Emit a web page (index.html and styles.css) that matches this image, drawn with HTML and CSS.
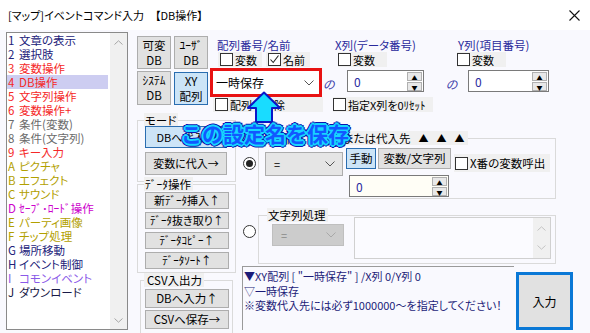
FILE: index.html
```html
<!DOCTYPE html>
<html lang="ja">
<head>
    <meta charset="UTF-8" />
    <title>イベントコマンド入力</title>
    <link rel="stylesheet" href="styles.css">
</head>
<body>
<div class="titlebar">
    <span>[マップ]イベントコマンド入力　【DB操作】</span>
    <svg class="close" width="11" height="11" viewBox="0 0 11 11"><path d="M0.5 0.5L10.5 10.5M10.5 0.5L0.5 10.5" stroke="#111" stroke-width="1.1"/></svg>
</div>

<div class="dialog">
    <!-- コマンド一覧 -->
    <div class="cmdlist">
        <ul>
            <li class="navy"><b>1</b>文章の表示</li>
            <li class="navy"><b>2</b>選択肢</li>
            <li class="red"><b>3</b>変数操作</li>
            <li class="red sel"><b>4</b>DB操作</li>
            <li class="red"><b>5</b>文字列操作</li>
            <li class="red"><b>6</b>変数操作+</li>
            <li class="gray"><b>7</b>条件(変数)</li>
            <li class="gray"><b>8</b>条件(文字列)</li>
            <li class="red"><b>9</b>キー入力</li>
            <li class="olive"><b>A</b>ピクチャ</li>
            <li class="olive"><b>B</b>エフェクト</li>
            <li class="olive"><b>C</b>サウンド</li>
            <li class="magenta"><b>D</b>ｾｰﾌﾞ･ﾛｰﾄﾞ操作</li>
            <li class="olive"><b>E</b>パーティ画像</li>
            <li class="olive"><b>F</b>チップ処理</li>
            <li class="navy"><b>G</b>場所移動</li>
            <li class="navy"><b>H</b>イベント制御</li>
            <li class="purple"><b>I</b>コモンイベント</li>
            <li class="dark"><b>J</b>ダウンロード</li>
        </ul>
        <div class="vscroll">
            <svg width="9" height="5" viewBox="0 0 9 5"><path d="M0.5 4.5L4.5 0.8L8.5 4.5" fill="none" stroke="#a6a6a6"/></svg>
            <svg width="9" height="5" viewBox="0 0 9 5"><path d="M0.5 0.5L4.5 4.2L8.5 0.5" fill="none" stroke="#a6a6a6"/></svg>
        </div>
    </div>

    <div class="panel">
        <div class="top">
            <div class="dbtypes">
                <button class="btn">可変<br>DB</button>
                <button class="btn">ﾕｰｻﾞ<br>DB</button>
                <button class="btn">ｼｽﾃﾑ<br>DB</button>
                <button class="btn on xy">XY<br>配列</button>
            </div>

            <div class="cap cap-name">配列番号/名前</div>
            <div class="checks-name">
                <label class="chk"><span class="box"></span>変数</label>
                <label class="chk"><span class="box checked"><svg width="11" height="11" viewBox="0 0 11 11"><path d="M1.5 5.5L4.2 8.5L9.5 1.5" fill="none" stroke="#222" stroke-width="1.1"/></svg></span>名前</label>
            </div>
            <div class="namebox">
                <div class="combo white">
                    <span>一時保存</span>
                    <svg width="10" height="6" viewBox="0 0 10 6"><path d="M0.5 0.5L5 5L9.5 0.5" fill="none" stroke="#555"/></svg>
                </div>
            </div>
            <label class="chk chk-unname"><span class="box"></span>配列名解除</label>

            <span class="no no1">の</span>

            <div class="cap cap-x">X列(データ番号)</div>
            <label class="chk chk-xvar"><span class="box"></span>変数</label>
            <div class="num num-x">
                <span class="val">0</span>
                <span class="spin"><i>▲</i><i>▼</i></span>
            </div>
            <label class="chk chk-reset"><span class="box"></span>指定X列を0ﾘｾｯﾄ</label>

            <span class="no no2">の</span>

            <div class="cap cap-y">Y列(項目番号)</div>
            <label class="chk chk-yvar"><span class="box"></span>変数</label>
            <div class="num num-y">
                <span class="val">0</span>
                <span class="spin"><i>▲</i><i>▼</i></span>
            </div>
        </div>

        <div class="bottom">
            <div class="leftcol">
                <div class="group g-mode">
                    <div class="legend">モード</div>
                    <button class="btn on b-db">DBへ代入←</button>
                    <button class="btn b-var">変数に代入→</button>
                </div>
                <div class="group g-data">
                    <div class="legend">ﾃﾞｰﾀ操作</div>
                    <button class="btn small">新ﾃﾞｰﾀ挿入↑</button>
                    <button class="btn small">ﾃﾞｰﾀ抜き取り↑</button>
                    <button class="btn small">ﾃﾞｰﾀｺﾋﾟｰ↑</button>
                    <button class="btn small">ﾃﾞｰﾀｿｰﾄ↑</button>
                </div>
                <div class="group g-csv">
                    <div class="legend">CSV入出力</div>
                    <button class="btn csv">DBへ入力↑</button>
                    <button class="btn csv">CSVへ保存→</button>
                </div>
            </div>

            <div class="rightcol">
                <div class="row r-assign">
                    <span class="radio on"></span>
                    <div class="group g-assign">
                        <div class="legend"><span class="hid">代入値</span><span class="lbl">または代入先</span><span class="tri">▲</span><span class="tri">▲</span><span class="tri">▲</span></div>
                        <div class="assign-body">
                            <div class="combo op">
                                <span>=</span>
                                <svg width="10" height="6" viewBox="0 0 10 6"><path d="M0.5 0.5L5 5L9.5 0.5" fill="none" stroke="#555"/></svg>
                            </div>
                            <div class="assign-right">
                                <div class="assign-btns">
                                    <button class="btn on b-man">手動</button>
                                    <button class="btn b-str">変数/文字列</button>
                                    <label class="chk chk-call"><span class="box"></span>X番の変数呼出</label>
                                </div>
                                <div class="num num-val">
                                    <span class="val">0</span>
                                    <span class="spin"><i>▲</i><i>▼</i></span>
                                </div>
                            </div>
                        </div>
                    </div>
                </div>

                <div class="row r-str">
                    <span class="radio"></span>
                    <div class="group g-str">
                        <div class="str-left">
                            <div class="legend">文字列処理</div>
                            <div class="combo disabled">
                                <span>=</span>
                                <svg width="10" height="6" viewBox="0 0 10 6"><path d="M0.5 0.5L5 5L9.5 0.5" fill="none" stroke="#a8a8a8"/></svg>
                            </div>
                        </div>
                        <div class="textarea">
                            <div class="tscroll">
                                <svg width="9" height="5" viewBox="0 0 9 5"><path d="M0.5 4.5L4.5 0.8L8.5 4.5" fill="none" stroke="#c4c4c4"/></svg>
                                <svg width="9" height="5" viewBox="0 0 9 5"><path d="M0.5 0.5L4.5 4.2L8.5 0.5" fill="none" stroke="#c4c4c4"/></svg>
                            </div>
                        </div>
                    </div>
                </div>

                <div class="row r-info">
                    <div class="info">
                        <div>▼XY配列 [ "一時保存" ] /X列 0/Y列 0</div>
                        <div>▽一時保存</div>
                        <div>※変数代入先には必ず1000000～を指定してください！</div>
                    </div>
                    <button class="btn enter">入力</button>
                </div>
            </div>
        </div>
    </div>

    <!-- 注釈 -->
    <svg class="note-arrow" width="36" height="32" viewBox="0 0 36 32">
        <path d="M18 1.5L34 17H26V31H10V17H2Z" fill="#19dcff" stroke="#0a18c8" stroke-width="2" stroke-linejoin="round"/>
    </svg>
    <div class="note-text">この設定名を保存</div>
</div>
</body>
</html>
```

FILE: styles.css
```css
* {
    box-sizing: border-box;
}
body {
    margin: 0;
    width: 590px;
    height: 333px;
    overflow: hidden;
    background: #f9f9fe;
    font-family: "Noto Sans CJK JP", "Noto Sans", sans-serif;
    font-size: 11px;
    font-feature-settings: "palt";
    color: #000;
}
.titlebar {
    height: 30px;
    background: #fff;
    display: flex;
    align-items: center;
    justify-content: space-between;
    padding: 0 10px 0 8px;
    font-size: 11px;
    line-height: 1;
}
.dialog {
    position: relative;
    display: flex;
    height: 303px;
    padding: 2px 0 0 6px;
}

/* list */
.cmdlist {
    width: 122px;
    height: 298px;
    border: 1px solid #8a8a8a;
    background: #fff;
    display: flex;
}
.cmdlist ul {
    list-style: none;
    margin: 0;
    padding: 0;
    flex: 1;
}
.cmdlist li {
    height: 14px;
    line-height: 14px;
    padding-left: 1px;
    font-size: 11.5px;
    white-space: nowrap;
}
.cmdlist li b {
    display: inline-block;
    width: 11px;
    font-weight: normal;
}
.cmdlist li.sel { background: #cdcdf1; }
.navy { color: #22227a; }
.red { color: #f52828; }
.gray { color: #6b6b6b; }
.olive { color: #b2a000; }
.magenta { color: #cc00cc; }
.purple { color: #8a5ae8; }
.dark { color: #1a1a48; }
.vscroll {
    width: 17px;
    margin-left: 2px;
    background: #f0f0f0;
    display: flex;
    flex-direction: column;
    justify-content: space-between;
    align-items: center;
    padding: 7px 0 6px;
}

/* controls */
.btn {
    font: inherit;
    font-feature-settings: "palt";
    color: #000;
    background: #e1e1e1;
    border: 1px solid #adadad;
    padding: 0;
    line-height: 15px;
    white-space: nowrap;
}
.btn.on {
    background: #cce4f7;
    border-color: #2a6db0;
}
.chk {
    display: flex;
    align-items: center;
    gap: 2px;
    height: 15px;
    background: #f0f0f0;
    white-space: nowrap;
}
.box {
    width: 13px;
    height: 13px;
    border: 1px solid #333;
    background: #fff;
    display: flex;
    align-items: center;
    justify-content: center;
    flex: none;
}
.combo {
    display: flex;
    align-items: center;
    justify-content: space-between;
    background: #e5e5e5;
    border: 1px solid #adadad;
    padding: 0 7px 0 8px;
}
.combo.white {
    background: #fff;
    border: none;
    height: 100%;
    padding: 0 5px 0 3px;
    font-size: 12px;
}
.combo.disabled {
    background: #cccccc;
    border-color: #bfbfbf;
    color: #8a8a8a;
}
.num {
    display: flex;
    align-items: center;
    justify-content: space-between;
    background: #fff;
    border: 1px solid #7a7a7a;
    padding: 0 1px 0 6px;
    color: #2a2aa0;
    font-size: 12px;
}
.spin {
    display: flex;
    flex-direction: column;
    gap: 1px;
}
.spin i {
    font-style: normal;
    width: 15px;
    height: 9px;
    line-height: 9px;
    font-size: 6px;
    text-align: center;
    background: #e8e8e8;
    border: 1px solid #b0b0b0;
    color: #000;
}
.radio {
    width: 13px;
    height: 13px;
    border-radius: 50%;
    border: 1px solid #333;
    background: #fff;
    display: flex;
    align-items: center;
    justify-content: center;
    flex: none;
}
.radio.on::after {
    content: "";
    width: 7px;
    height: 7px;
    border-radius: 50%;
    background: #222;
}

/* panel */
.panel {
    margin-left: 9px;
    width: 438px;
}
.top {
    display: grid;
    grid-template-columns: 73px 113px 12px 110px 13px 117px;
    grid-template-rows: 15px 16px 30px 15px;
    margin-top: 4px;
}
.dbtypes {
    grid-column: 1;
    grid-row: 1 / 5;
    display: grid;
    grid-template-columns: 34px 34px;
    grid-template-rows: 33px 34px;
    column-gap: 3px;
    row-gap: 2px;
    align-self: start;
}
.dbtypes .btn {
    font-size: 11.5px;
}
.dbtypes .xy {
    margin-top: 1px;
}
.cap {
    color: #2a2a9c;
    line-height: 15px;
    white-space: nowrap;
    margin-top: 2px;
    font-size: 11.5px;
}
.cap-name { grid-column: 2; grid-row: 1; padding-left: 7px; }
.cap-x { grid-column: 4; grid-row: 1; }
.cap-y { grid-column: 6; grid-row: 1; }
.checks-name {
    grid-column: 2;
    grid-row: 2;
    display: flex;
    gap: 4px;
    margin: 1px 0 0 8px;
}
.checks-name .chk {
    padding: 0 5px 0 2px;
}
.namebox {
    grid-column: 2;
    grid-row: 3;
    border: 3px solid #e81212;
    height: 29px;
    margin-top: 1px;
    margin-right: 1px;
}
.chk-unname {
    grid-column: 2;
    grid-row: 4;
    margin: 0 0 0 3px;
    padding-left: 2px;
}
.no {
    grid-row: 3;
    align-self: center;
    color: #3a3aa8;
    font-style: italic;
    margin-top: 2px;
    font-size: 12px;
}
.no1 { grid-column: 3; }
.no2 { grid-column: 5; justify-self: center; }
.chk-xvar {
    grid-column: 4;
    grid-row: 2;
    width: 49px;
    margin: 1px 0 0 3px;
}
.chk-yvar {
    grid-column: 6;
    grid-row: 2;
    width: 49px;
    margin: 1px 0 0 -1px;
}
.num-x {
    grid-column: 4;
    grid-row: 3;
    width: 77px;
    height: 22px;
    margin: 3px 0 0 12px;
}
.num-y {
    grid-column: 6;
    grid-row: 3;
    width: 81px;
    height: 22px;
    margin: 3px 0 0 10px;
}
.chk-reset {
    grid-column: 4;
    grid-row: 4;
    width: 100px;
    margin-left: -2px;
}

/* bottom */
.bottom {
    display: flex;
}
.leftcol {
    width: 99px;
}
.group {
    border: 1px solid #dadada;
}
.legend {
    width: fit-content;
    height: 14px;
    line-height: 14px;
    background: #f0f0f0;
    padding: 0 2px 0 1px;
    margin-top: -8px;
    white-space: nowrap;
    font-size: 11.5px;
}
.g-mode {
    margin-top: 8px;
    height: 62px;
    padding-left: 6px;
}
.g-mode .btn {
    display: block;
    width: 82px;
    margin-left: 1px;
}
.b-db {
    height: 22px;
    margin-top: -1px;
}
.b-var {
    height: 23px;
    margin-top: 4px;
}
.g-data {
    margin-top: 2px;
    height: 89px;
    padding-left: 6px;
}
.btn.small {
    display: block;
    width: 84px;
    height: 17px;
    line-height: 15px;
    margin: 3px 0 0 1px;
}
.g-data .btn.small:first-of-type {
    margin-top: 1px;
}
.g-csv {
    margin: 7px 0 0 3px;
    width: 93px;
    height: 60px;
    padding-left: 3px;
}
.g-csv .legend {
    padding-left: 3px;
}
.btn.csv {
    display: block;
    width: 84px;
    height: 19px;
    margin: 2px 0 0 1px;
    font-size: 11.5px;
}
.btn.csv + .btn.csv {
    margin-top: 2px;
}

.rightcol {
    margin-left: 6px;
    width: 333px;
}
.row {
    display: flex;
}
.row .radio {
    margin-left: 1px;
    margin-right: 2px;
}
.r-assign {
    margin-top: 26px;
}
.r-assign .radio {
    margin-top: 19px;
}
.g-assign {
    width: 298px;
    height: 61px;
}
.g-assign .legend {
    display: flex;
    margin-left: 3px;
    padding: 0 3px 0 1px;
}
.g-assign .legend span {
    flex: none;
}
.g-assign .hid {
    width: 80px;
    overflow: hidden;
}
.g-assign .tri {
    margin-left: 8px;
    font-size: 10px;
}
.assign-body {
    display: flex;
    margin-top: 3px;
    padding-left: 6px;
}
.combo.op {
    width: 78px;
    height: 24px;
    margin-top: 4px;
}
.assign-right {
    margin-left: 3px;
}
.assign-btns {
    display: flex;
}
.b-man {
    width: 30px;
    height: 21px;
    font-size: 11.5px;
}
.b-str {
    width: 73px;
    height: 21px;
    margin-left: 2px;
    font-size: 11.5px;
}
.chk-call {
    width: 96px;
    height: 18px;
    margin: 6px 0 0 3px;
    padding-left: 1px;
    font-size: 11.5px;
}
.num-val {
    width: 100px;
    height: 22px;
    margin: 3px 0 0 3px;
    background: #fffef6;
}
.r-str {
    margin-top: 16px;
}
.r-str .radio {
    margin-top: 10px;
}
.g-str {
    width: 298px;
    height: 49px;
    display: flex;
}
.str-left {
    width: 95px;
}
.str-left .legend {
    margin-left: 8px;
}
.combo.disabled {
    width: 72px;
    height: 22px;
    margin: 2px 0 0 13px;
}
.textarea {
    width: 197px;
    height: 42px;
    margin-top: 1px;
    background: #fbfbff;
    border: 1px solid #d0d0d0;
    display: flex;
    justify-content: flex-end;
}
.tscroll {
    width: 17px;
    background: #f0f0f0;
    display: flex;
    flex-direction: column;
    justify-content: space-between;
    align-items: center;
    padding: 8px 0 8px;
}
.r-info {
    margin-top: 2px;
}
.info {
    width: 272px;
    height: 64px;
    border-top: 1px solid #9a9a9a;
    border-left: 1px solid #9a9a9a;
    padding: 2px 0 0 1px;
    line-height: 14.5px;
    color: #1c1c78;
    white-space: nowrap;
}
.btn.enter {
    width: 57px;
    height: 58px;
    margin: 6px 0 0 2px;
    border: 3px solid #0a78d6;
    font-size: 12px;
}

/* note overlay */
.note-arrow {
    position: absolute;
    left: 246px;
    top: 61px;
}
.note-text {
    position: absolute;
    left: 181px;
    top: 90px;
    font-size: 21px;
    font-weight: bold;
    line-height: 26px;
    color: #1258ff;
    font-feature-settings: normal;
    text-shadow:
        1px 0 0 #16d6ff, -1px 0 0 #16d6ff, 0 1px 0 #16d6ff, 0 -1px 0 #16d6ff,
        1px 1px 0 #16d6ff, -1px -1px 0 #16d6ff, 1px -1px 0 #16d6ff, -1px 1px 0 #16d6ff,
        2px 0 0 #16d6ff, -2px 0 0 #16d6ff, 0 2px 0 #16d6ff, 0 -2px 0 #16d6ff,
        3px 0 0 #0a14b0, -3px 0 0 #0a14b0, 0 3px 0 #0a14b0, 0 -3px 0 #0a14b0,
        2px 2px 0 #0a14b0, -2px -2px 0 #0a14b0, 2px -2px 0 #0a14b0, -2px 2px 0 #0a14b0;
    white-space: nowrap;
}
```
